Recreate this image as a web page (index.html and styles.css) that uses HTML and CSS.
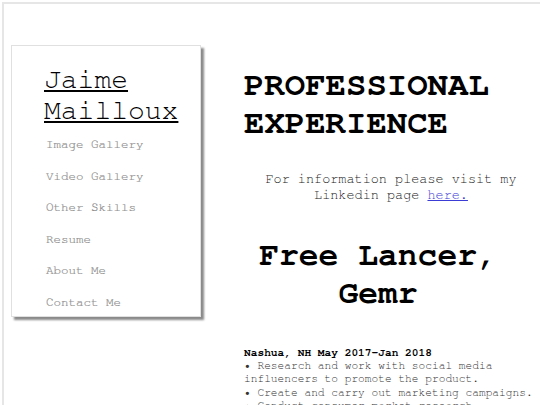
FILE: index.html
```html
<!DOCTYPE html>
<html>
<head>
<meta charset="utf-8">
<link rel="stylesheet" href="styles.css">
</head>
<body>
<div class="page">
  <aside class="sidebar">
    <a class="name" href="#">Jaime Mailloux</a>
    <nav class="nav">
      <a href="#">Image Gallery</a>
      <a href="#">Video Gallery</a>
      <a href="#">Other Skills</a>
      <a href="#">Resume</a>
      <a href="#">About Me</a>
      <a href="#">Contact Me</a>
    </nav>
  </aside>
  <main class="content">
    <h1 class="title">PROFESSIONAL EXPERIENCE</h1>
    <p class="info">For information please visit my Linkedin page <a href="#">here.</a></p>
    <h2 class="job">Free Lancer, Gemr</h2>
    <div class="details">
      <p class="place">Nashua, NH May 2017-Jan 2018</p>
      <p class="item">&bull; Research and work with social media influencers to promote the product.</p>
      <p class="item">&bull; Create and carry out marketing campaigns.</p>
      <p class="item">&bull; Conduct consumer market research.</p>
    </div>
  </main>
</div>
</body>
</html>
```
FILE: styles.css
```css
html, body {
  margin: 0;
  padding: 0;
  background: #fff;
  overflow: hidden;
}
body {
  font-family: "FreeMono", "TeX Gyre Cursor", "Liberation Mono", monospace;
  color: #000;
}
.page {
  margin: 2px 0 0 2px;
  border-top: 2px solid #e6e6e6;
  border-left: 2px solid #e6e6e6;
  display: flex;
  align-items: flex-start;
  width: 600px;
  height: 420px;
}
.sidebar {
  margin: 41px 0 0 7px;
  width: 190px;
  height: 272px;
  border: 1px solid #e0e0e0;
  box-shadow: 3px 3px 2px #8a8a8a;
  padding: 19px 0 0 32px;
  box-sizing: border-box;
  flex: none;
  display: flex;
  flex-direction: column;
}
.name {
  font-size: 28px;
  line-height: 31px;
  color: #000;
  text-decoration: underline;
}
.nav {
  display: flex;
  flex-direction: column;
  padding-left: 2px;
  margin-top: 2px;
}
.nav a {
  font-size: 12.5px;
  line-height: 31.6px;
  color: #8c8c8c;
  text-decoration: none;
  -webkit-text-stroke: 0.2px #8c8c8c;
}
.content {
  margin-left: 43px;
  width: 294px;
  flex: none;
}
.title {
  margin: 62px 0 0 0;
  font-size: 34px;
  line-height: 38px;
  font-weight: bold;
}
.info {
  margin: 29px 0 0 0;
  text-align: center;
  font-size: 13.5px;
  line-height: 16px;
  color: #222;
}
.info a {
  color: #3b3bd6;
}
.job {
  margin: 34px 26px 0 0;
  text-align: center;
  font-size: 33px;
  line-height: 38px;
  font-weight: bold;
}
.details {
  margin-top: 33px;
  font-size: 11.2px;
  line-height: 13.2px;
}
.details p {
  margin: 0;
}
.place {
  font-weight: bold;
}
.item {
  color: #333;
}
```
